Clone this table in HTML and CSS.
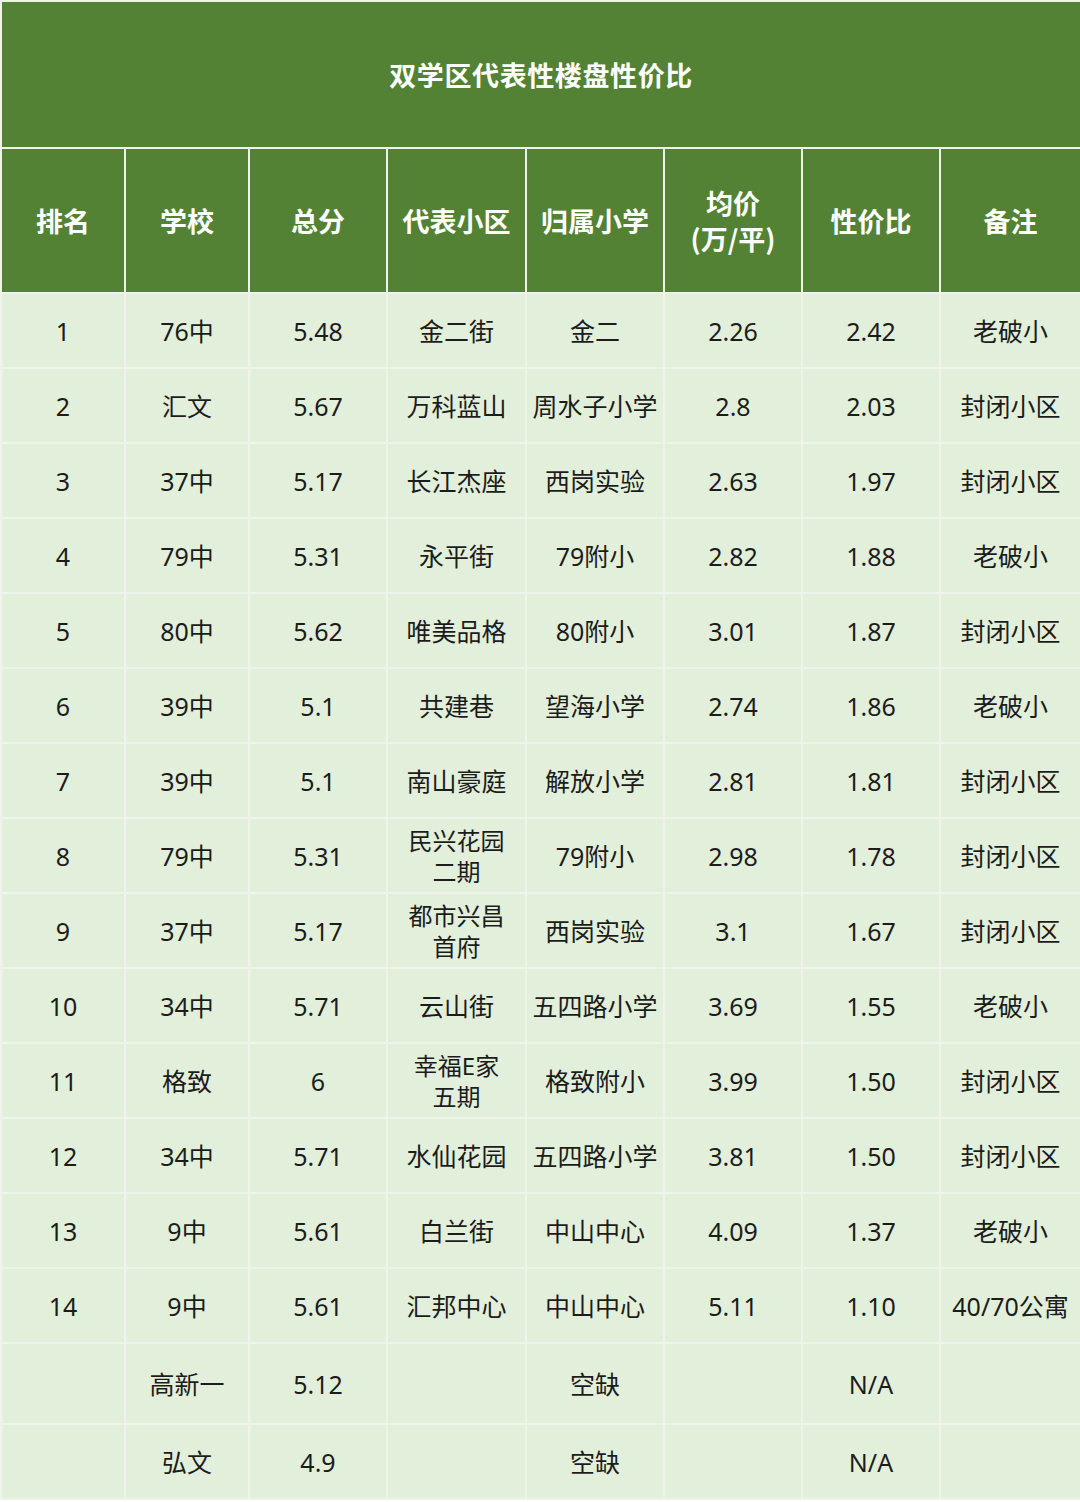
FILE: index.html
```html
<!DOCTYPE html>
<html lang="zh">
<head>
<meta charset="utf-8">
<link rel="stylesheet" href="styles.css">
</head>
<body>
<table class="grid">
  <colgroup>
    <col class="c1"><col class="c2"><col class="c3"><col class="c4"><col class="c5"><col class="c6"><col class="c7"><col class="c8">
  </colgroup>
  <thead>
    <tr class="title-row"><th colspan="8" class="title">双学区代表性楼盘性价比</th></tr>
    <tr class="head-row">
      <th>排名</th><th>学校</th><th>总分</th><th>代表小区</th><th>归属小学</th><th>均价<br>(万/平)</th><th>性价比</th><th>备注</th>
    </tr>
  </thead>
  <tbody>
    <tr><td>1</td><td>76中</td><td>5.48</td><td>金二街</td><td>金二</td><td>2.26</td><td>2.42</td><td>老破小</td></tr>
    <tr><td>2</td><td>汇文</td><td>5.67</td><td>万科蓝山</td><td>周水子小学</td><td>2.8</td><td>2.03</td><td>封闭小区</td></tr>
    <tr><td>3</td><td>37中</td><td>5.17</td><td>长江杰座</td><td>西岗实验</td><td>2.63</td><td>1.97</td><td>封闭小区</td></tr>
    <tr><td>4</td><td>79中</td><td>5.31</td><td>永平街</td><td>79附小</td><td>2.82</td><td>1.88</td><td>老破小</td></tr>
    <tr><td>5</td><td>80中</td><td>5.62</td><td>唯美品格</td><td>80附小</td><td>3.01</td><td>1.87</td><td>封闭小区</td></tr>
    <tr><td>6</td><td>39中</td><td>5.1</td><td>共建巷</td><td>望海小学</td><td>2.74</td><td>1.86</td><td>老破小</td></tr>
    <tr><td>7</td><td>39中</td><td>5.1</td><td>南山豪庭</td><td>解放小学</td><td>2.81</td><td>1.81</td><td>封闭小区</td></tr>
    <tr><td>8</td><td>79中</td><td>5.31</td><td class="wrap">民兴花园<br>二期</td><td>79附小</td><td>2.98</td><td>1.78</td><td>封闭小区</td></tr>
    <tr><td>9</td><td>37中</td><td>5.17</td><td class="wrap">都市兴昌<br>首府</td><td>西岗实验</td><td>3.1</td><td>1.67</td><td>封闭小区</td></tr>
    <tr><td>10</td><td>34中</td><td>5.71</td><td>云山街</td><td>五四路小学</td><td>3.69</td><td>1.55</td><td>老破小</td></tr>
    <tr><td>11</td><td>格致</td><td>6</td><td class="wrap">幸福E家<br>五期</td><td>格致附小</td><td>3.99</td><td>1.50</td><td>封闭小区</td></tr>
    <tr><td>12</td><td>34中</td><td>5.71</td><td>水仙花园</td><td>五四路小学</td><td>3.81</td><td>1.50</td><td>封闭小区</td></tr>
    <tr><td>13</td><td>9中</td><td>5.61</td><td>白兰街</td><td>中山中心</td><td>4.09</td><td>1.37</td><td>老破小</td></tr>
    <tr><td>14</td><td>9中</td><td>5.61</td><td>汇邦中心</td><td>中山中心</td><td>5.11</td><td>1.10</td><td>40/70公寓</td></tr>
    <tr class="tall"><td></td><td>高新一</td><td>5.12</td><td></td><td>空缺</td><td></td><td>N/A</td><td></td></tr>
    <tr class="last"><td></td><td>弘文</td><td>4.9</td><td></td><td>空缺</td><td></td><td>N/A</td><td></td></tr>
  </tbody>
</table>
</body>
</html>
```

FILE: styles.css
```css
html, body {
  margin: 0;
  padding: 0;
  background: #ffffff;
}

.grid {
  width: 1080px;
  border-collapse: collapse;
  table-layout: fixed;
  font-family: "Noto Sans", "Noto Sans CJK SC", sans-serif;
  color: #1c1c1c;
}

.c1 { width: 124px; }
.c2 { width: 124px; }
.c3 { width: 138px; }
.c4 { width: 139px; }
.c5 { width: 138px; }
.c6 { width: 138px; }
.c7 { width: 138px; }
.c8 { width: 141px; }

.grid th,
.grid td {
  border: 2px solid #eef4ea;
  text-align: center;
  vertical-align: middle;
  padding: 0;
}

.grid th {
  background: #548235;
  color: #ffffff;
  font-family: "Noto Sans CJK SC", sans-serif;
  font-weight: 700;
}

.title-row { height: 147px; }
.title {
  font-size: 27px;
  letter-spacing: 0.6px;
}

.head-row { height: 145px; }
.head-row th {
  font-size: 27px;
  line-height: 36px;
}

.grid td {
  background: #e2efda;
  font-size: 25px;
  line-height: 30px;
  height: 73px;
}

.grid td.wrap {
  font-size: 24px;
  line-height: 31px;
}

.tall td { height: 79px; }
.last td { height: 73px; }
```
